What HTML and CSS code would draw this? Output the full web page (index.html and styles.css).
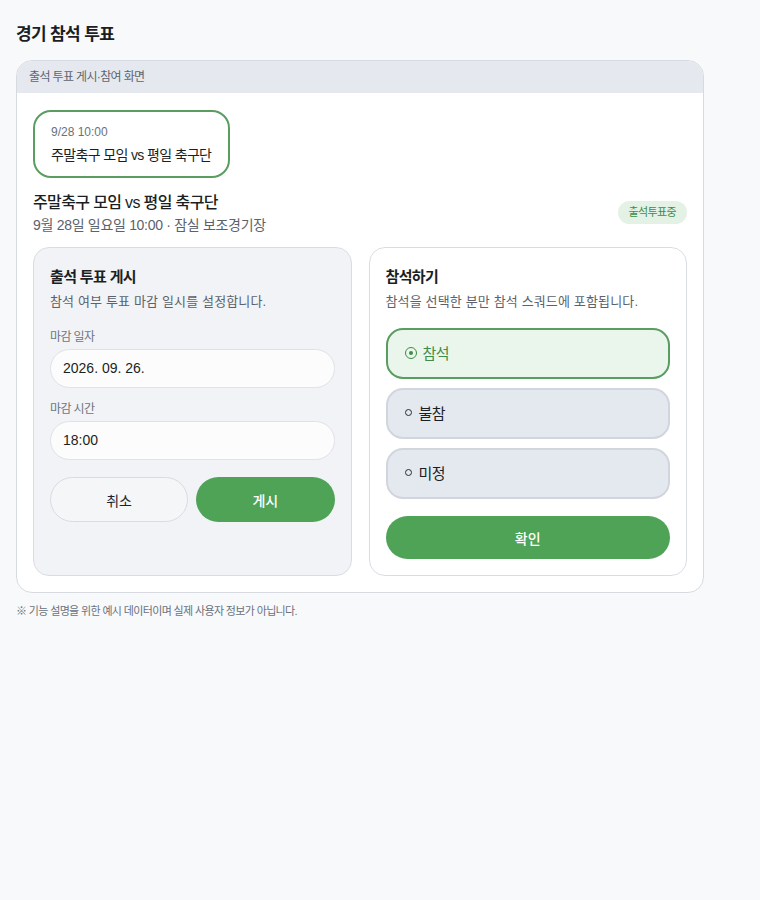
FILE: index.html
```html
<!DOCTYPE html>
<html lang="ko">
<head>
<meta charset="utf-8">
<title>경기 참석 투표</title>
<link rel="stylesheet" href="styles.css">
</head>
<body>
<h1 class="page-title">경기 참석 투표</h1>
<section class="card">
  <div class="card-head">출석 투표 게시·참여 화면</div>
  <div class="card-body">
    <div class="match-chip">
      <div class="chip-time">9/28 10:00</div>
      <div class="chip-name">주말축구 모임 vs 평일 축구단</div>
    </div>
    <div class="match-row">
      <div>
        <div class="match-title">주말축구 모임 vs 평일 축구단</div>
        <div class="match-sub">9월 28일 일요일 10:00 · 잠실 보조경기장</div>
      </div>
      <span class="badge">출석투표중</span>
    </div>
    <div class="panels">
      <div class="panel panel-gray">
        <div class="panel-title">출석 투표 게시</div>
        <div class="panel-desc">참석 여부 투표 마감 일시를 설정합니다.</div>
        <div class="field-label first">마감 일자</div>
        <div class="input">2026. 09. 26.</div>
        <div class="field-label">마감 시간</div>
        <div class="input">18:00</div>
        <div class="btn-row">
          <button class="btn btn-ghost">취소</button>
          <button class="btn btn-green">게시</button>
        </div>
      </div>
      <div class="panel panel-white">
        <div class="panel-title">참석하기</div>
        <div class="panel-desc">참석을 선택한 분만 참석 스쿼드에 포함됩니다.</div>
        <div class="options">
          <div class="option selected"><span class="radio-on"></span>참석</div>
          <div class="option"><span class="radio-off"></span>불참</div>
          <div class="option"><span class="radio-off"></span>미정</div>
        </div>
        <button class="btn btn-green btn-confirm">확인</button>
      </div>
    </div>
  </div>
</section>
<p class="footnote">※ 기능 설명을 위한 예시 데이터이며 실제 사용자 정보가 아닙니다.</p>
</body>
</html>
```
FILE: styles.css
```css
* { box-sizing: border-box; }
html, body { margin: 0; }
body {
  background: #f8f9fb;
  padding: 23px 16px 20px;
  font-family: "Liberation Sans", "Noto Sans CJK KR", sans-serif;
  letter-spacing: -0.04em;
  color: #1b1f24;
}
.page-title {
  margin: 0 0 13px;
  font-size: 17px;
  line-height: 24px;
  font-weight: 700;
  color: #1b1f24;
}
.card {
  width: 688px;
  background: #fff;
  border: 1px solid #d7dbe1;
  border-radius: 16px;
  overflow: hidden;
}
.card-head {
  background: #e5e8ee;
  height: 32px;
  line-height: 32px;
  padding: 0 12px;
  font-size: 12px;
  color: #5d6570;
}
.card-body {
  padding: 17px 16px 16px;
}
.match-chip {
  display: inline-block;
  border: 2px solid #5a9d61;
  border-radius: 18px;
  padding: 11px 17px 11px 16px;
}
.chip-time {
  font-size: 12px;
  line-height: 18px;
  color: #6a717b;
  letter-spacing: 0;
}
.chip-name {
  margin-top: 4px;
  font-size: 14px;
  line-height: 20px;
  color: #1b1f24;
}
.match-row {
  margin-top: 14px;
  display: flex;
  justify-content: space-between;
  align-items: center;
}
.match-title {
  font-size: 16px;
  line-height: 22px;
  font-weight: 500;
}
.match-sub {
  margin-top: 1px;
  font-size: 14px;
  line-height: 20px;
  color: #5b626c;
  letter-spacing: -0.3px;
}
.badge {
  background: #e4f2e6;
  color: #3e8d48;
  font-size: 11px;
  line-height: 23px;
  padding: 0 11px;
  border-radius: 12px;
  margin-top: -3px;
}
.panels {
  margin-top: 12px;
  display: grid;
  grid-template-columns: 1fr 1fr;
  gap: 17px;
}
.panel {
  border: 1px solid #d9dde3;
  border-radius: 16px;
  padding: 18px 16px 16px;
}
.panel-gray { background: #f1f3f6; }
.panel-white { background: #fff; }
.panel-title {
  font-size: 15px;
  line-height: 22px;
  font-weight: 700;
}
.panel-desc {
  margin-top: 4px;
  font-size: 13px;
  line-height: 20px;
  color: #5b626c;
  letter-spacing: 0.15px;
}
.field-label {
  margin-top: 12px;
  font-size: 12px;
  line-height: 18px;
  color: #6e757f;
}
.field-label.first { margin-top: 16px; }
.input {
  margin-top: 3px;
  height: 39px;
  line-height: 37px;
  border: 1px solid #dfe2e7;
  border-radius: 20px;
  background: #fcfcfd;
  padding: 0 12px;
  font-size: 14px;
  color: #1b1f24;
  letter-spacing: 0;
}
.btn-row {
  margin-top: 17px;
  display: grid;
  grid-template-columns: 1fr 1fr;
  gap: 8px;
}
.btn {
  font-family: "Liberation Sans", "Noto Sans CJK KR", sans-serif;
  font-size: 14px;
  border-radius: 23px;
  cursor: pointer;
  height: 45px;
}
.btn-ghost {
  background: #f5f6f8;
  border: 1px solid #d8dce2;
  color: #1f2328;
}
.btn-green {
  background: #4ea356;
  border: none;
  color: #fff;
  font-weight: 500;
}
.options {
  margin-top: 16px;
  display: flex;
  flex-direction: column;
  gap: 9px;
}
.option {
  height: 51px;
  display: flex;
  align-items: center;
  border: 2px solid #d1d6de;
  background: #e4e8ef;
  border-radius: 17px;
  padding: 0 16px 2px 17px;
  font-size: 15px;
  color: #1b1f24;
}
.option.selected {
  border-color: #5a9d61;
  background: #eaf6eb;
  color: #3e8d48;
}
.radio-on {
  width: 12px;
  height: 12px;
  border: 1px solid #3e8d48;
  border-radius: 50%;
  margin-right: 6px;
  display: flex;
  align-items: center;
  justify-content: center;
}
.radio-on::after {
  content: "";
  width: 4px;
  height: 4px;
  border-radius: 50%;
  background: #3e8d48;
}
.radio-off {
  width: 7px;
  height: 7px;
  border: 1px solid #2a2e33;
  border-radius: 50%;
  margin-right: 7px;
}
.btn-confirm {
  width: 100%;
  margin-top: 17px;
  height: 43px;
  border-radius: 22px;
}
.footnote {
  margin: 9px 0 0;
  font-size: 11px;
  line-height: 18px;
  color: #6a717b;
}
```
